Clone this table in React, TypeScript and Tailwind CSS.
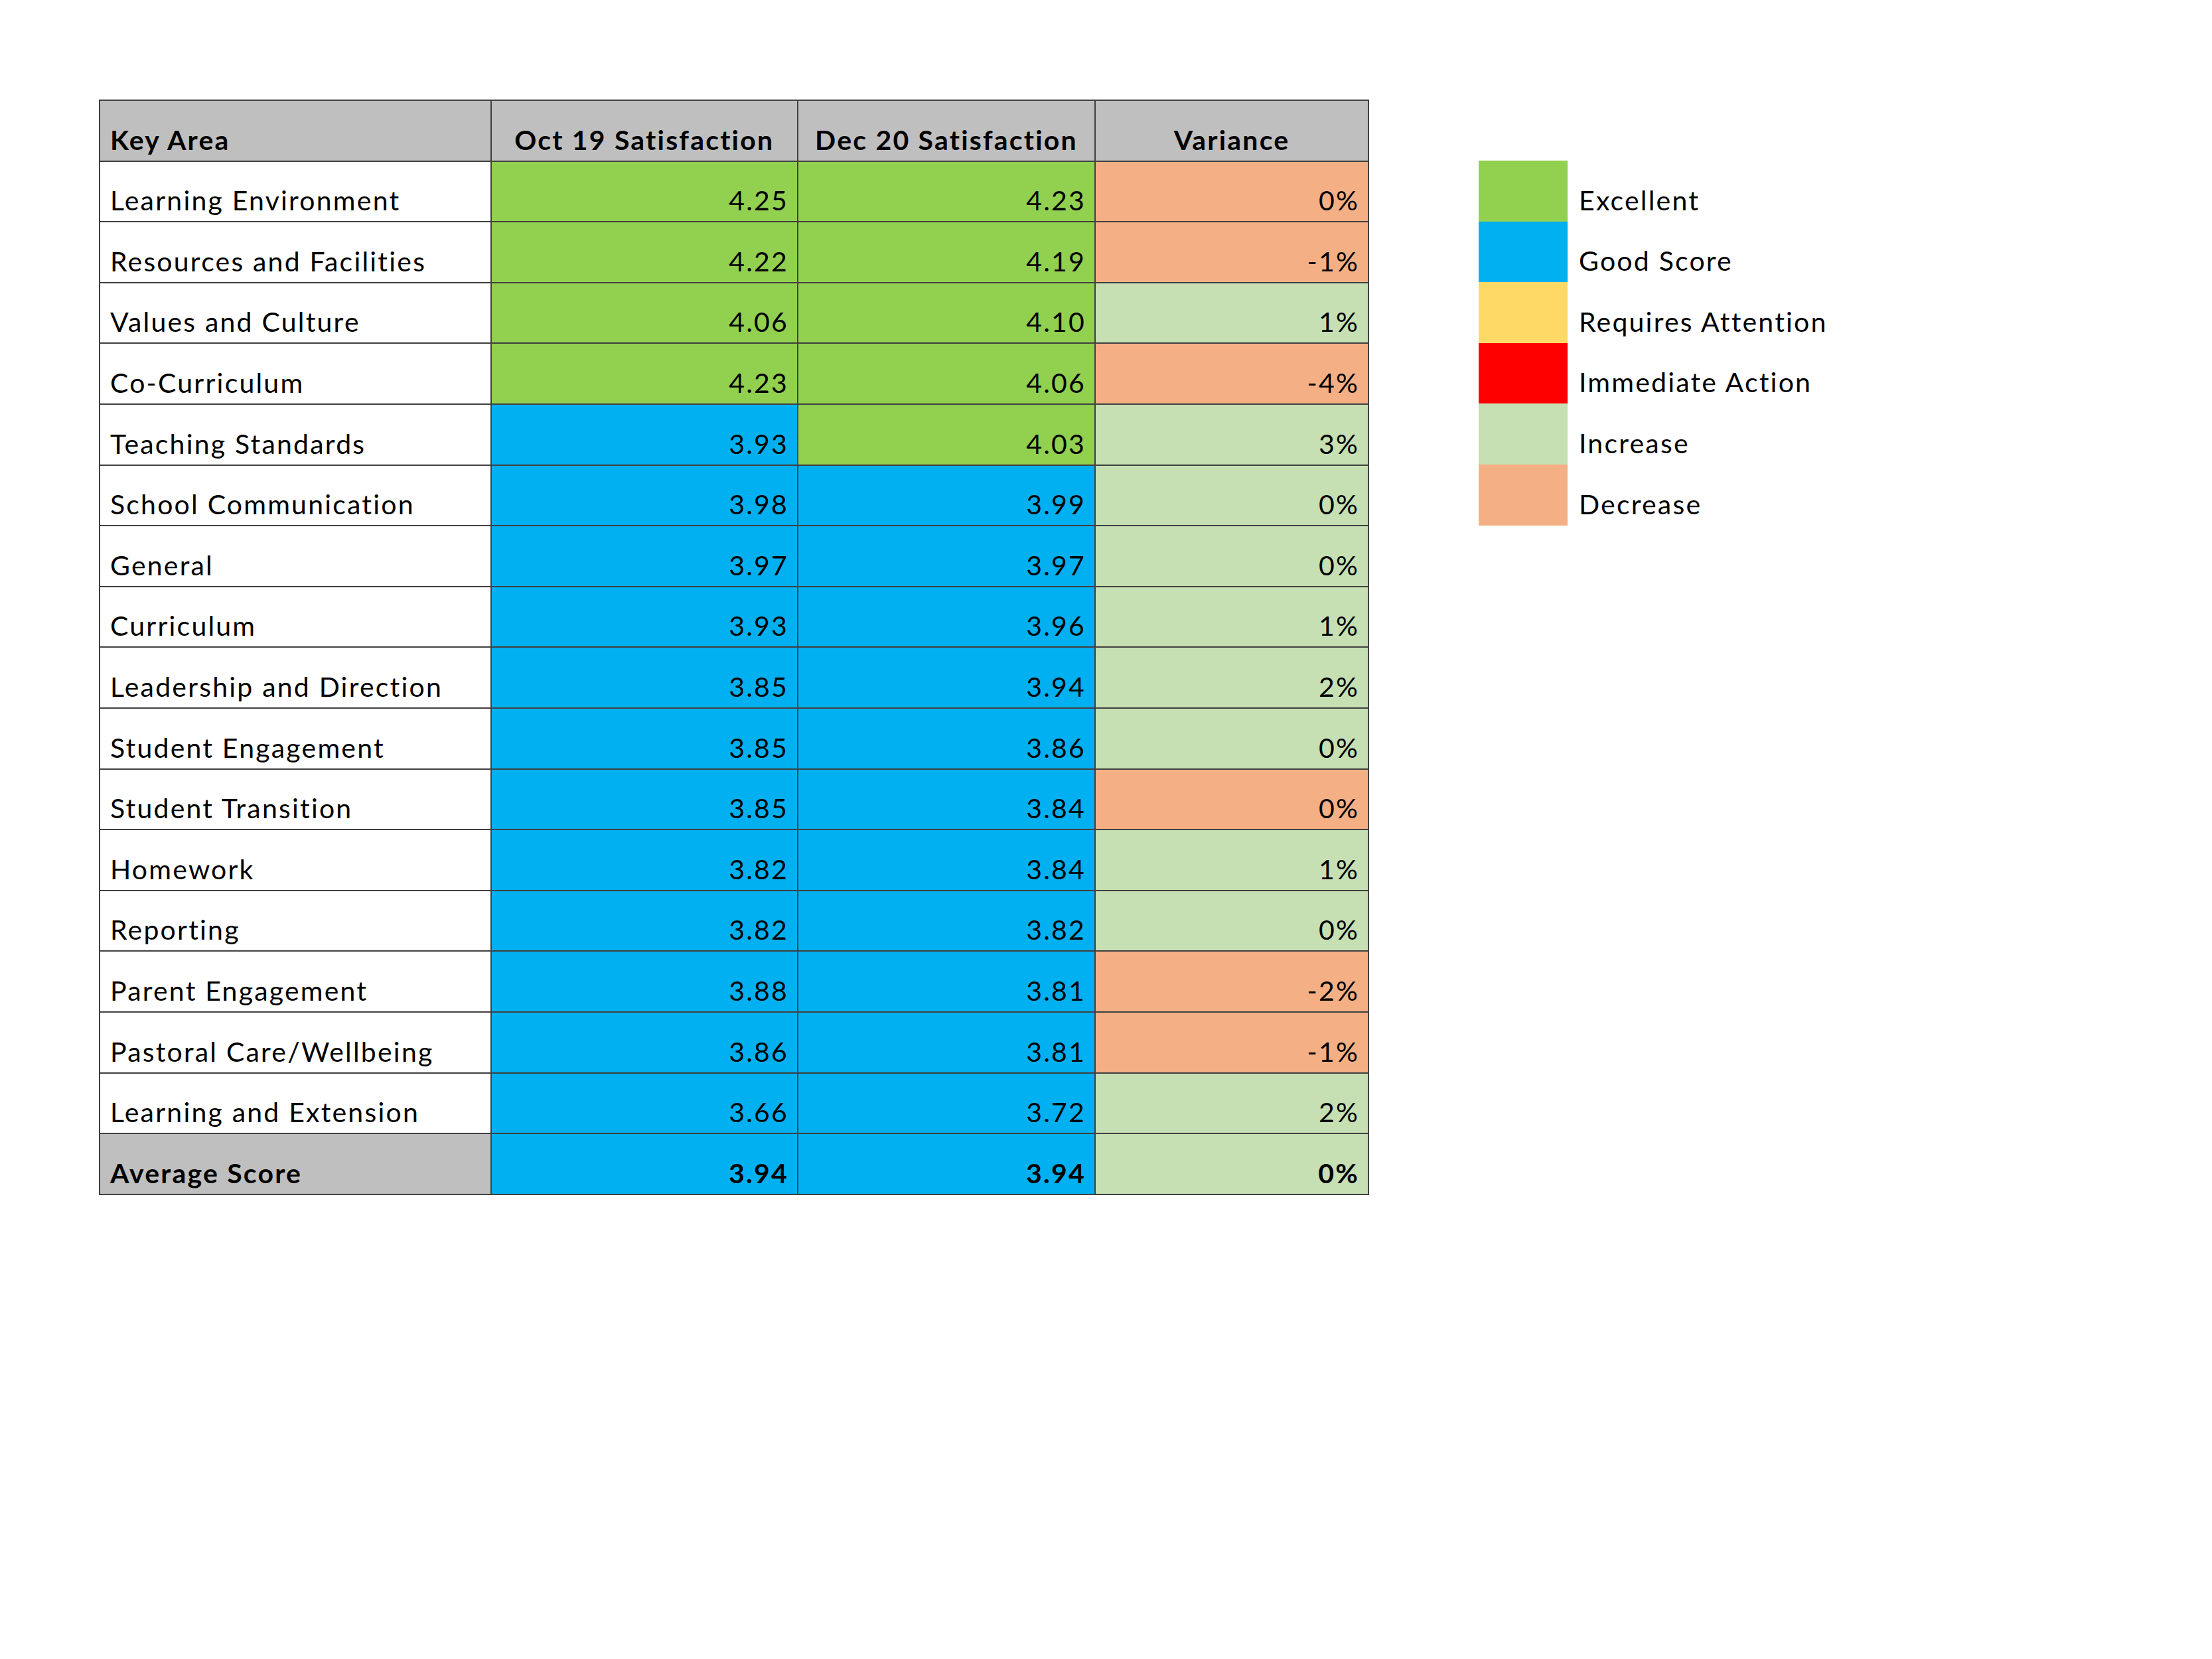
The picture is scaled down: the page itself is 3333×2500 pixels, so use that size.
const rows = [
  { area: "Learning Environment", oct: "4.25", dec: "4.23", variance: "0%", octTone: "green", decTone: "green", up: false },
  { area: "Resources and Facilities", oct: "4.22", dec: "4.19", variance: "-1%", octTone: "green", decTone: "green", up: false },
  { area: "Values and Culture", oct: "4.06", dec: "4.10", variance: "1%", octTone: "green", decTone: "green", up: true },
  { area: "Co-Curriculum", oct: "4.23", dec: "4.06", variance: "-4%", octTone: "green", decTone: "green", up: false },
  { area: "Teaching Standards", oct: "3.93", dec: "4.03", variance: "3%", octTone: "blue", decTone: "green", up: true },
  { area: "School Communication", oct: "3.98", dec: "3.99", variance: "0%", octTone: "blue", decTone: "blue", up: true },
  { area: "General", oct: "3.97", dec: "3.97", variance: "0%", octTone: "blue", decTone: "blue", up: true },
  { area: "Curriculum", oct: "3.93", dec: "3.96", variance: "1%", octTone: "blue", decTone: "blue", up: true },
  { area: "Leadership and Direction", oct: "3.85", dec: "3.94", variance: "2%", octTone: "blue", decTone: "blue", up: true },
  { area: "Student Engagement", oct: "3.85", dec: "3.86", variance: "0%", octTone: "blue", decTone: "blue", up: true },
  { area: "Student Transition", oct: "3.85", dec: "3.84", variance: "0%", octTone: "blue", decTone: "blue", up: false },
  { area: "Homework", oct: "3.82", dec: "3.84", variance: "1%", octTone: "blue", decTone: "blue", up: true },
  { area: "Reporting", oct: "3.82", dec: "3.82", variance: "0%", octTone: "blue", decTone: "blue", up: true },
  { area: "Parent Engagement", oct: "3.88", dec: "3.81", variance: "-2%", octTone: "blue", decTone: "blue", up: false },
  { area: "Pastoral Care/Wellbeing", oct: "3.86", dec: "3.81", variance: "-1%", octTone: "blue", decTone: "blue", up: false },
  { area: "Learning and Extension", oct: "3.66", dec: "3.72", variance: "2%", octTone: "blue", decTone: "blue", up: true },
]

const toneBg: Record<string, string> = {
  green: "bg-[#92d050]",
  blue: "bg-[#00b0f0]",
}

const legend = [
  { label: "Excellent", swatch: "bg-[#92d050]" },
  { label: "Good Score", swatch: "bg-[#00b0f0]" },
  { label: "Requires Attention", swatch: "bg-[#ffd966]" },
  { label: "Immediate Action", swatch: "bg-[#ff0000]" },
  { label: "Increase", swatch: "bg-[#c6e0b4]" },
  { label: "Decrease", swatch: "bg-[#f4b084]" },
]

const cell = "border-2 border-[#404040] align-bottom pb-[11px] leading-none"
const left = `${cell} text-left pl-[15px]`
const right = `${cell} text-right pr-[13px]`
const center = `${cell} text-center`

export default function App() {
  return (
    <div className="min-h-screen bg-white text-black font-['Lato','Open_Sans',sans-serif] text-[41px] tracking-[2.2px]">
      <div className="flex items-start pl-[149px] pt-[150px] gap-[165px]">
        <table className="border-collapse table-fixed w-[1914px]">
          <colgroup>
            <col className="w-[589.5px]" />
            <col className="w-[462.5px]" />
            <col className="w-[448px]" />
            <col className="w-[412px]" />
          </colgroup>
          <thead>
            <tr className="h-[91.6px] bg-[#bfbfbf] font-bold">
              <th className={left}>Key Area</th>
              <th className={center}>Oct 19 Satisfaction</th>
              <th className={center}>Dec 20 Satisfaction</th>
              <th className={center}>Variance</th>
            </tr>
          </thead>
          <tbody>
            {rows.map((row) => (
              <tr key={row.area} className="h-[91.6px]">
                <td className={`${left} bg-white`}>{row.area}</td>
                <td className={`${right} ${toneBg[row.octTone]}`}>{row.oct}</td>
                <td className={`${right} ${toneBg[row.decTone]}`}>{row.dec}</td>
                <td className={`${right} ${row.up ? "bg-[#c6e0b4]" : "bg-[#f4b084]"}`}>{row.variance}</td>
              </tr>
            ))}
            <tr className="h-[91.6px] font-bold">
              <td className={`${left} bg-[#bfbfbf]`}>Average Score</td>
              <td className={`${right} bg-[#00b0f0]`}>3.94</td>
              <td className={`${right} bg-[#00b0f0]`}>3.94</td>
              <td className={`${right} bg-[#c6e0b4]`}>0%</td>
            </tr>
          </tbody>
        </table>

        <div className="flex flex-col pt-[92px]">
          {legend.map((item) => (
            <div key={item.label} className="flex items-end h-[91.6px]">
              <div className={`w-[134px] h-full ${item.swatch}`} />
              <span className="pl-[17px] pb-[12px] leading-none">{item.label}</span>
            </div>
          ))}
        </div>
      </div>
    </div>
  )
}
